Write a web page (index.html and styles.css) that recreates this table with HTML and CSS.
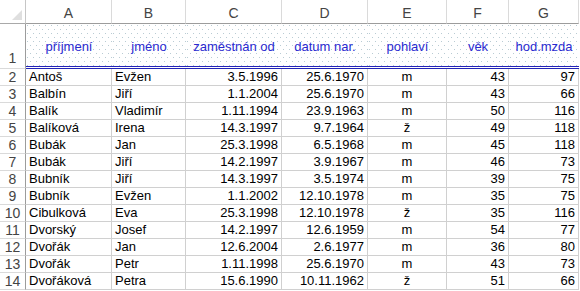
FILE: index.html
```html
<!DOCTYPE html>
<html>
<head>
<meta charset="utf-8">
<link rel="stylesheet" href="styles.css">
</head>
<body>
<div class="sheet">
  <div class="corner"><span class="tri"></span></div>
  <div class="colh">A</div><div class="colh">B</div><div class="colh">C</div><div class="colh">D</div><div class="colh">E</div><div class="colh">F</div><div class="colh">G</div>

  <div class="rowh r1">1</div>
  <div class="hd">příjmení</div><div class="hd">jméno</div><div class="hd">zaměstnán od</div><div class="hd">datum nar.</div><div class="hd">pohlaví</div><div class="hd">věk</div><div class="hd">hod.mzda</div>

  <div class="rowh">2</div><div class="c">Antoš</div><div class="c">Evžen</div><div class="c n">3.5.1996</div><div class="c n">25.6.1970</div><div class="c m">m</div><div class="c n">43</div><div class="c n">97</div>
  <div class="rowh">3</div><div class="c">Balbín</div><div class="c">Jiří</div><div class="c n">1.1.2004</div><div class="c n">25.6.1970</div><div class="c m">m</div><div class="c n">43</div><div class="c n">66</div>
  <div class="rowh">4</div><div class="c">Balík</div><div class="c">Vladimír</div><div class="c n">1.11.1994</div><div class="c n">23.9.1963</div><div class="c m">m</div><div class="c n">50</div><div class="c n">116</div>
  <div class="rowh">5</div><div class="c">Balíková</div><div class="c">Irena</div><div class="c n">14.3.1997</div><div class="c n">9.7.1964</div><div class="c m">ž</div><div class="c n">49</div><div class="c n">118</div>
  <div class="rowh">6</div><div class="c">Bubák</div><div class="c">Jan</div><div class="c n">25.3.1998</div><div class="c n">6.5.1968</div><div class="c m">m</div><div class="c n">45</div><div class="c n">118</div>
  <div class="rowh">7</div><div class="c">Bubák</div><div class="c">Jiří</div><div class="c n">14.2.1997</div><div class="c n">3.9.1967</div><div class="c m">m</div><div class="c n">46</div><div class="c n">73</div>
  <div class="rowh">8</div><div class="c">Bubník</div><div class="c">Jiří</div><div class="c n">14.3.1997</div><div class="c n">3.5.1974</div><div class="c m">m</div><div class="c n">39</div><div class="c n">75</div>
  <div class="rowh">9</div><div class="c">Bubník</div><div class="c">Evžen</div><div class="c n">1.1.2002</div><div class="c n">12.10.1978</div><div class="c m">m</div><div class="c n">35</div><div class="c n">75</div>
  <div class="rowh">10</div><div class="c">Cibulková</div><div class="c">Eva</div><div class="c n">25.3.1998</div><div class="c n">12.10.1978</div><div class="c m">ž</div><div class="c n">35</div><div class="c n">116</div>
  <div class="rowh">11</div><div class="c">Dvorský</div><div class="c">Josef</div><div class="c n">14.2.1997</div><div class="c n">12.6.1959</div><div class="c m">m</div><div class="c n">54</div><div class="c n">77</div>
  <div class="rowh">12</div><div class="c">Dvořák</div><div class="c">Jan</div><div class="c n">12.6.2004</div><div class="c n">2.6.1977</div><div class="c m">m</div><div class="c n">36</div><div class="c n">80</div>
  <div class="rowh">13</div><div class="c">Dvořák</div><div class="c">Petr</div><div class="c n">1.11.1998</div><div class="c n">25.6.1970</div><div class="c m">m</div><div class="c n">43</div><div class="c n">73</div>
  <div class="rowh">14</div><div class="c">Dvořáková</div><div class="c">Petra</div><div class="c n">15.6.1990</div><div class="c n">10.11.1962</div><div class="c m">ž</div><div class="c n">51</div><div class="c n">66</div>
</div>
</body>
</html>
```

FILE: styles.css
```css
html, body {
  margin: 0;
  padding: 0;
  background: #ffffff;
}
body {
  font-family: "Liberation Sans", Arial, sans-serif;
  font-size: 13px;
  color: #000;
  overflow: hidden;
}
.sheet {
  display: grid;
  grid-template-columns: 26px 86px 74px 96px 86px 79px 62px 70px;
  grid-template-rows: 24px 45px repeat(13, 17px);
  width: 579px;
}
.sheet > div {
  box-sizing: border-box;
  overflow: hidden;
  white-space: nowrap;
}
.corner {
  border-right: 1px solid #c6c6c6;
  border-bottom: 1px solid #a9a9a9;
  position: relative;
}
.tri {
  position: absolute;
  right: 3px;
  bottom: 3px;
  width: 0;
  height: 0;
  border-left: 10px solid transparent;
  border-bottom: 10px solid #dfdfdf;
}
.colh {
  border-right: 1px solid #dadada;
  border-bottom: 1px solid #9c9c9c;
  display: flex;
  align-items: center;
  justify-content: center;
  font-size: 14px;
  color: #444;
  padding-top: 2px;
}
.rowh {
  border-right: 1px solid #9c9c9c;
  border-bottom: 1px solid #dadada;
  display: flex;
  align-items: center;
  justify-content: center;
  font-size: 14px;
  color: #444;
}
.rowh.r1 {
  align-items: flex-end;
  padding-bottom: 2px;
}
.hd {
  border-bottom: 3px double #2323b8;
  background-color: #ffffff;
  background-image:
    radial-gradient(circle at 1.5px 1.5px, #b9cbd3 0.6px, transparent 0.9px),
    radial-gradient(circle at 1.5px 1.5px, #b9cbd3 0.6px, transparent 0.9px);
  background-size: 6px 8px, 6px 8px;
  background-position: 0 0, 3px 4px;
  color: #2a2ad0;
  display: flex;
  align-items: center;
  justify-content: center;
  padding-top: 2px;
}
.c {
  border-right: 1px solid #d0d0d0;
  border-bottom: 1px solid #d0d0d0;
  padding: 0 3px;
  line-height: 16px;
}
.n {
  text-align: right;
}
.m {
  text-align: center;
}
```
